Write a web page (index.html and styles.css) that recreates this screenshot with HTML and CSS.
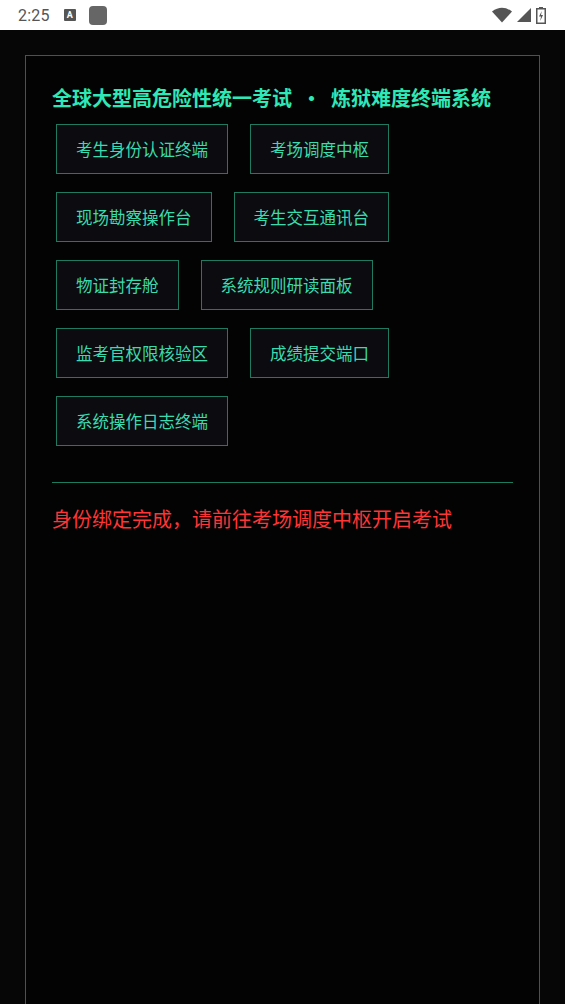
FILE: index.html
```html
<!DOCTYPE html>
<html lang="zh">
<head>
<meta charset="utf-8">
<link rel="stylesheet" href="styles.css">
</head>
<body>
<div class="statusbar">
  <div class="sb-left">
    <span class="time">2:25</span>
    <span class="a-icon">A</span>
    <span class="blob"></span>
  </div>
  <div class="sb-right">
    <svg width="20" height="16" viewBox="0 0 20 16"><path d="M0 4.5 Q10 -3 20 4.5 L10 15.5 Z" fill="#555"/></svg>
    <svg width="14" height="14" viewBox="0 0 14 14"><path d="M14 0 L14 14 L0 14 Z" fill="#555"/></svg>
    <svg width="10" height="17" viewBox="0 0 10 17"><rect x="3" y="0" width="4" height="2" fill="#555"/><rect x="0.75" y="1.75" width="8.5" height="14.5" fill="none" stroke="#555" stroke-width="1.5"/><path d="M5.8 4 L3 9.5 L5 9.5 L4.2 14 L7 8 L5 8 Z" fill="#555"/></svg>
  </div>
</div>
<main class="screen">
  <section class="panel">
    <h1 class="title">全球大型高危险性统一考试<span class="sep"> · </span>炼狱难度终端系统</h1>
    <div class="buttons">
      <button class="btn">考生身份认证终端</button>
      <button class="btn">考场调度中枢</button>
      <button class="btn">现场勘察操作台</button>
      <button class="btn">考生交互通讯台</button>
      <button class="btn">物证封存舱</button>
      <button class="btn">系统规则研读面板</button>
      <button class="btn">监考官权限核验区</button>
      <button class="btn">成绩提交端口</button>
      <button class="btn">系统操作日志终端</button>
    </div>
    <hr class="divider">
    <p class="message">身份绑定完成，请前往考场调度中枢开启考试</p>
  </section>
</main>
</body>
</html>
```

FILE: styles.css
```css
html, body {
  margin: 0;
  padding: 0;
  background: #060606;
}
body {
  width: 565px;
  height: 1004px;
  overflow: hidden;
  font-family: "Noto Sans CJK SC", "Noto Sans", sans-serif;
}
.statusbar {
  height: 30px;
  background: #ffffff;
  display: flex;
  align-items: center;
  justify-content: space-between;
  padding: 0 19px 0 18px;
  box-sizing: border-box;
}
.sb-left {
  display: flex;
  align-items: center;
}
.time {
  font-family: Roboto, "Noto Sans", sans-serif;
  font-size: 16px;
  color: #555;
  letter-spacing: 0.2px;
}
.a-icon {
  margin-left: 14px;
  width: 12px;
  height: 12px;
  background: #555;
  color: #fff;
  font-family: Roboto, sans-serif;
  font-weight: bold;
  font-size: 9px;
  line-height: 12px;
  text-align: center;
  border-radius: 1px;
}
.blob {
  margin-left: 13px;
  width: 18px;
  height: 19px;
  background: #666;
  border-radius: 4px;
}
.sb-right {
  display: flex;
  align-items: center;
  gap: 5px;
}
.screen {
  padding: 25px 25px 0 25px;
}
.panel {
  border: 1px solid #1c6a55;
  border-bottom: none;
  background: #030303;
  min-height: 960px;
  padding: 24px 26px 0 26px;
}
.title {
  margin: 0 0 8px 0;
  font-size: 20px;
  line-height: 36px;
  font-weight: bold;
  color: #2ee8b6;
  white-space: nowrap;
}
.sep {
  white-space: pre;
  padding: 0 5px;
}
.buttons {
  display: flex;
  flex-wrap: wrap;
  column-gap: 22px;
  row-gap: 18px;
  padding: 0 4px;
}
.btn {
  height: 50px;
  padding: 0 19px;
  background: #0b0b10;
  border: 1px solid #1f7a60;
  color: #3adbae;
  font-family: "Noto Sans CJK SC", "Noto Sans", sans-serif;
  font-size: 16.5px;
  border-radius: 0;
}
.divider {
  margin: 36px 0 0 0;
  border: none;
  border-top: 1px solid #1c7a5f;
  height: 0;
}
.message {
  margin: 16px 0 0 0;
  font-size: 20px;
  line-height: 40px;
  color: #ff3535;
}
```
